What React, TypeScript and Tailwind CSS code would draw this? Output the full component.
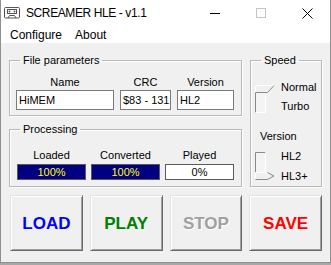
const ui = "font-['Liberation_Sans',Arial,sans-serif]";

function TapeIcon() {
  return (
    <svg width="16" height="12" viewBox="0 0 16 12" className="shrink-0">
      <rect x="0.5" y="0.5" width="15" height="10.5" rx="1" fill="none" stroke="#555" />
      <rect x="3.5" y="2.5" width="9" height="4" fill="none" stroke="#555" />
      <circle cx="5.5" cy="4.5" r="0.9" fill="#555" />
      <circle cx="10.5" cy="4.5" r="0.9" fill="#555" />
      <path d="M4 11 L5.5 8.5 H10.5 L12 11" fill="none" stroke="#555" />
    </svg>
  );
}

function Switch({ down }: { down?: boolean }) {
  // little trackbar-style toggle; thumb at top or bottom
  const ty = down ? 20 : 0;
  return (
    <svg width="20" height="28" viewBox="0 0 20 28" className="shrink-0">
      <rect x="0.5" y="0.5" width="10" height="27" fill="#f4f4f4" />
      <path d="M0.5 27.5 V0.5 H10.5" fill="none" stroke="#8a8a8a" />
      <path d="M10.5 0.5 V27.5 H0.5" fill="none" stroke="#ffffff" />
      {down ? (
        <g transform={`translate(0 ${ty})`}>
          <polygon points="0.5,0.5 12.5,0.5 19,4 12.5,7.5 0.5,7.5" fill="#f0f0f0" />
          <path d="M0.5 7.5 V0.5 H12.5" fill="none" stroke="#ffffff" />
          <path d="M0.5 7.5 H12.5 L19 4 L12.5 0.5" fill="none" stroke="#8a8a8a" />
        </g>
      ) : (
        <g>
          <polygon points="0.5,0.5 12.5,0.5 19,0.5 12.5,7.5 0.5,7.5" fill="#f0f0f0" />
          <path d="M0.5 7.5 V0.5 H19" fill="none" stroke="#ffffff" />
          <path d="M0.5 7.5 H12.5 L19 0.5" fill="none" stroke="#8a8a8a" />
        </g>
      )}
    </svg>
  );
}

const groupCls =
  "border border-[#b9b9b9] shadow-[inset_1px_1px_0_#ffffff,1px_1px_0_#ffffff] min-w-0";
const legendCls = "ml-[10px] px-[3px] text-[11px] leading-[13px] text-black";

const bars = [
  { label: "Loaded", value: "100%", full: true },
  { label: "Converted", value: "100%", full: true },
  { label: "Played", value: "0%", full: false },
];

const buttons = [
  { label: "LOAD", color: "text-[#0000ff]" },
  { label: "PLAY", color: "text-[#008000]" },
  { label: "STOP", color: "text-[#a0a0a0] [text-shadow:1px_1px_0_#ffffff]" },
  { label: "SAVE", color: "text-[#ff0000]" },
];

export default function App() {
  return (
    <div className={`w-[331px] h-[265px] bg-[#a8a8a8] ${ui}`}>
      <div className="w-[331px] h-[263px] flex flex-col border-x border-b border-[#8f8f8f] bg-white">
        {/* Title bar */}
        <div className="h-[26px] flex items-center pl-[3px]">
          <TapeIcon />
          <span className="ml-[6px] text-[12px] tracking-[-0.4px] text-black">SCREAMER HLE - v1.1</span>
          <div className="ml-auto flex h-full">
            <div className="w-[46px] flex items-center justify-center">
              <div className="w-[10px] h-px bg-black" />
            </div>
            <div className="w-[46px] flex items-center justify-center">
              <div className="w-[10px] h-[10px] border border-[#c4c4c4]" />
            </div>
            <div className="w-[46px] flex items-center justify-center">
              <svg width="11" height="11" viewBox="0 0 11 11">
                <path d="M0.5 0.5 L10.5 10.5 M10.5 0.5 L0.5 10.5" stroke="#000" strokeWidth="1" />
              </svg>
            </div>
          </div>
        </div>

        {/* Menu bar */}
        <div className="h-[17px] flex items-center gap-[13px] pl-[9px] text-[12px] text-black">
          <span>Configure</span>
          <span>About</span>
        </div>

        {/* Client area */}
        <div className="flex-1 bg-[#f0f0f0] px-[8px] pt-[11px] text-[11px] leading-[13px] text-black">
          <div className="flex gap-[8px]">
            <div className="w-[233px] flex flex-col">
              <fieldset className={groupCls}>
                <legend className={legendCls}>File parameters</legend>
                <div className="flex gap-[6px] pl-[6px] pt-[9px] pb-[5px]">
                  <div className="w-[98px] flex flex-col items-center">
                    <span>Name</span>
                    <div className="mt-px w-full h-[20px] bg-white border border-[#7a7a7a] px-[2px] flex items-center overflow-hidden whitespace-nowrap">HiMEM</div>
                  </div>
                  <div className="w-[51px] flex flex-col items-center">
                    <span>CRC</span>
                    <div className="mt-px w-full h-[20px] bg-white border border-[#7a7a7a] px-[2px] flex items-center overflow-hidden whitespace-nowrap">$83 - 131</div>
                  </div>
                  <div className="w-[57px] flex flex-col items-center">
                    <span>Version</span>
                    <div className="mt-px w-full h-[20px] bg-white border border-[#7a7a7a] px-[2px] flex items-center overflow-hidden whitespace-nowrap">HL2</div>
                  </div>
                </div>
              </fieldset>

              <fieldset className={`${groupCls} mt-[7px]`}>
                <legend className={legendCls}>Processing</legend>
                <div className="flex gap-[5px] pl-[7px] pt-[13px] pb-[6px]">
                  {bars.map((b) => (
                    <div key={b.label} className="w-[69px] flex flex-col items-center">
                      <span>{b.label}</span>
                      <div
                        className={`mt-[2px] w-full h-[16px] border border-[#5a5a5a] flex items-center justify-center ${
                          b.full ? "bg-[#000080] text-[#ffff00]" : "bg-white text-black"
                        }`}
                      >
                        {b.value}
                      </div>
                    </div>
                  ))}
                </div>
              </fieldset>
            </div>

            <fieldset className={`${groupCls} w-[72px]`}>
              <legend className={legendCls}>Speed</legend>
              <div className="flex pl-[4px] pt-[14px]">
                <div className="mt-[4px]">
                  <Switch />
                </div>
                <div className="ml-[6px] flex flex-col gap-[6px]">
                  <span>Normal</span>
                  <span>Turbo</span>
                </div>
              </div>
              <div className="pl-[9px] mt-[17px]">Version</div>
              <div className="flex pl-[4px] mt-[7px]">
                <div className="mt-[2px]">
                  <Switch down />
                </div>
                <div className="ml-[6px] flex flex-col gap-[7px]">
                  <span>HL2</span>
                  <span>HL3+</span>
                </div>
              </div>
            </fieldset>
          </div>

          {/* Action buttons */}
          <div className="flex gap-[7px] mt-[8px] pl-px">
            {buttons.map((b) => (
              <div
                key={b.label}
                className={`w-[73px] h-[56px] flex items-center justify-center bg-[#f0f0f0] border border-t-[#e3e3e3] border-l-[#e3e3e3] border-r-[#696969] border-b-[#696969] shadow-[inset_1px_1px_0_#ffffff,inset_-1px_-1px_0_#a0a0a0] text-[17px] font-bold ${b.color}`}
              >
                {b.label}
              </div>
            ))}
          </div>
        </div>
      </div>
    </div>
  );
}
